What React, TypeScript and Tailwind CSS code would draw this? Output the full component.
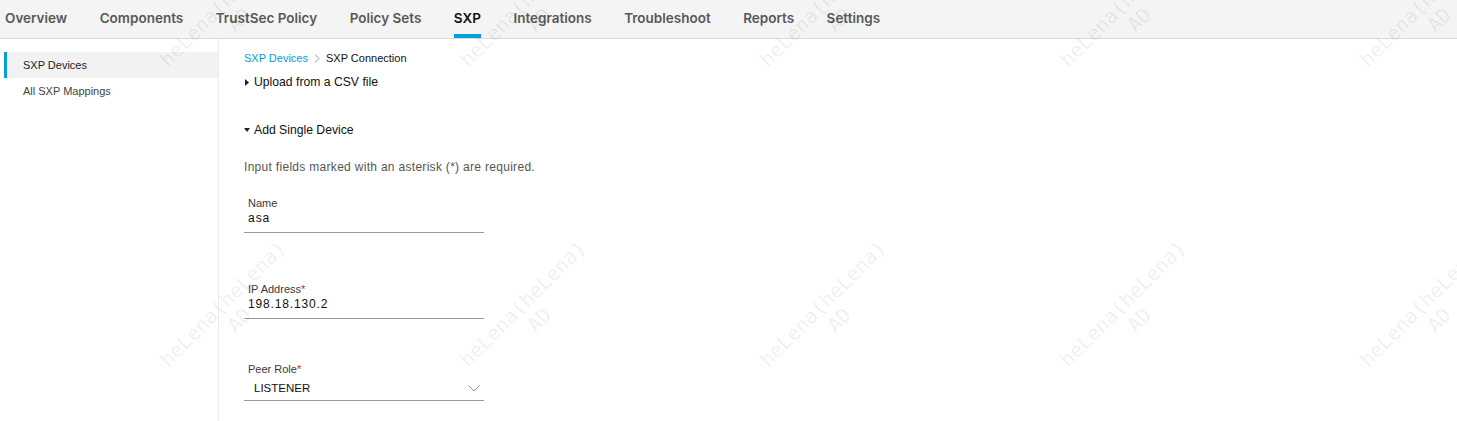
import type { ReactNode } from "react";

const TABS = [
	"Overview",
	"Components",
	"TrustSec Policy",
	"Policy Sets",
	"SXP",
	"Integrations",
	"Troubleshoot",
	"Reports",
	"Settings",
];

function TopNav() {
	return (
		<nav className="flex h-[39px] items-stretch gap-[32.5px] border-b border-[#d9d9d9] bg-[#f4f4f4] pl-[5px] font-['Inter',sans-serif] text-[13.5px] font-semibold">
			{TABS.map((tab) => (
				<div
					key={tab}
					className={
						tab === "SXP"
							? "flex items-center border-b-4 border-[#049fd9] pt-[2px] text-[#111]"
							: "flex items-center border-b-4 border-transparent pt-[2px] text-[#58585b]"
					}
				>
					{tab}
				</div>
			))}
		</nav>
	);
}

function Sidebar() {
	return (
		<aside className="ml-[4px] w-[215px] shrink-0 border-r border-[#ececec] pt-[13px] font-['Liberation_Sans',Arial,sans-serif] text-[11px]">
			<div className="flex h-[26px] items-center border-l-[3px] border-[#049fd9] bg-[#f2f2f2] pl-[16px] text-[#222]">
				SXP Devices
			</div>
			<div className="flex h-[26px] items-center pl-[19px] text-[#444]">
				All SXP Mappings
			</div>
		</aside>
	);
}

function Caret({ open }: { open: boolean }) {
	return open ? (
		<svg width="6" height="4" viewBox="0 0 6 4" className="mr-[4px]">
			<path d="M0 0h6L3 4z" fill="#222" />
		</svg>
	) : (
		<svg width="4" height="7" viewBox="0 0 4 7" className="mr-[5px]">
			<path d="M0 0l4 3.5L0 7z" fill="#222" />
		</svg>
	);
}

function Field({
	label,
	required,
	children,
	className,
}: {
	label: string;
	required?: boolean;
	children: ReactNode;
	className?: string;
}) {
	return (
		<div className={`w-[240px] border-b border-[#9a9a9a] ${className ?? ""}`}>
			<div className="h-[14px] pl-[4px] text-[11px] leading-[14px] text-[#39393b]">
				{label}
				{required && <span className="text-[#cf2030]">*</span>}
			</div>
			{children}
		</div>
	);
}

// faint user watermark tiled over the page, like the real console draws it
function Watermarks() {
	const cells = Array.from({ length: 15 });
	return (
		<div className="pointer-events-none absolute inset-0 overflow-hidden">
			<div className="absolute left-[81px] top-[-138px] grid grid-cols-[repeat(5,300px)] grid-rows-[repeat(3,300px)]">
				{cells.map((_, i) => (
					<div key={i} className="flex items-center justify-center">
						<div className="-rotate-45 text-center font-['DejaVu_Sans_Mono',monospace] text-[20px] leading-[23px] text-black/[0.075]">
							<div>heLena(heLena)</div>
							<div>AD</div>
						</div>
					</div>
				))}
			</div>
		</div>
	);
}

export default function App() {
	return (
		<div className="relative h-[421px] w-full overflow-hidden bg-white">
			<TopNav />
			<div className="flex h-[382px]">
				<Sidebar />
				<main className="pl-[25px] font-['Liberation_Sans',Arial,sans-serif] text-[#111]">
					<div className="mt-[12px] flex h-[14px] items-center text-[11px]">
						<span className="text-[#049fd9]">SXP Devices</span>
						<svg width="6" height="9" viewBox="0 0 6 9" className="mx-[6px]">
							<path d="M1 0.5l4 4-4 4" fill="none" stroke="#999" strokeWidth="1" />
						</svg>
						<span className="text-[#111]">SXP Connection</span>
					</div>
					<div className="mt-[9px] flex h-[16px] items-center pl-[1px] text-[12.2px]">
						<Caret open={false} />
						Upload from a CSV file
					</div>
					<div className="mt-[32px] flex h-[16px] items-center text-[12.2px]">
						<Caret open />
						Add Single Device
					</div>
					<div className="mt-[22px] h-[14px] text-[12px] leading-[14px] tracking-[0.025em] text-[#555]">
						Input fields marked with an asterisk (*) are required.
					</div>
					<Field label="Name" className="mt-[22px] pb-[6px]">
						<div className="h-[16px] pl-[4px] text-[12px] leading-[16px] tracking-[0.08em]">
							asa
						</div>
					</Field>
					<Field label="IP Address" required className="mt-[49px] pb-[6px]">
						<div className="h-[16px] pl-[4px] text-[12px] leading-[16px] tracking-[0.07em]">
							198.18.130.2
						</div>
					</Field>
					<Field label="Peer Role" required className="mt-[43px] pb-[4px]">
						<div className="mt-[4px] flex h-[16px] items-center justify-between pl-[10px] pr-[4px] text-[11.5px] leading-[16px]">
							<span>LISTENER</span>
							<svg width="12" height="7" viewBox="0 0 12 7">
								<path d="M0.5 0.5L6 6l5.5-5.5" fill="none" stroke="#7e97ad" strokeWidth="1" />
							</svg>
						</div>
					</Field>
				</main>
			</div>
			<Watermarks />
		</div>
	);
}
